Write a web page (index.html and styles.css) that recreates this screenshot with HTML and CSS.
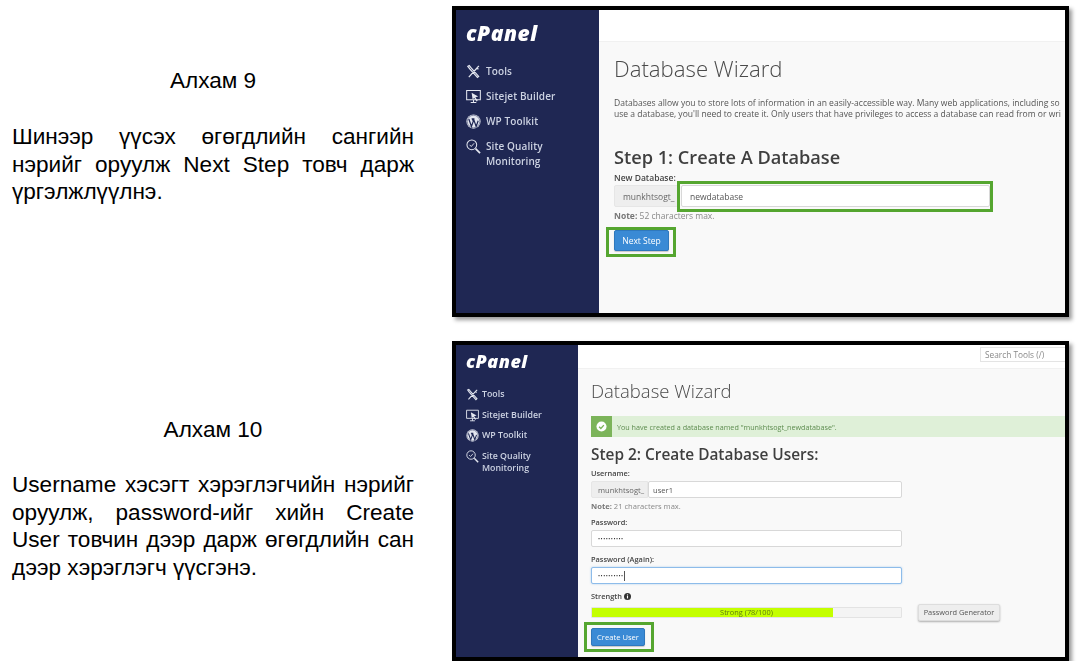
FILE: index.html
```html
<!DOCTYPE html>
<html lang="mn">
<head>
    <meta charset="UTF-8">
    <meta name="viewport" content="width=device-width, initial-scale=1.0">
    <title>Алхам 9, 10</title>
    <link rel="stylesheet" href="styles.css">
</head>
<body>
    <section class="step step-one">
        <div class="step-text">
            <h2>Алхам 9</h2>
            <p>Шинээр үүсэх өгөгдлийн сангийн нэрийг оруулж Next Step товч дарж үргэлжлүүлнэ.</p>
        </div>

        <div class="frame">
            <div class="shot">
                <aside class="side">
                    <div class="logo">cPanel</div>
                    <ul class="menu">
                        <li><svg class="ico" viewBox="0 0 16 16"><use href="#i-tools"/></svg><span>Tools</span></li>
                        <li><svg class="ico" viewBox="0 0 16 16"><use href="#i-sitejet"/></svg><span>Sitejet Builder</span></li>
                        <li><svg class="ico" viewBox="0 0 16 16"><use href="#i-wp"/></svg><span>WP Toolkit</span></li>
                        <li><svg class="ico" viewBox="0 0 16 16"><use href="#i-quality"/></svg><span>Site Quality<br>Monitoring</span></li>
                    </ul>
                </aside>
                <main class="main">
                    <div class="topbar"></div>
                    <div class="content">
                        <h1>Database Wizard</h1>
                        <p class="desc">Databases allow you to store lots of information in an easily-accessible way. Many web applications, including so<br>use a database, you'll need to create it. Only users that have privileges to access a database can read from or wri</p>
                        <h3>Step 1: Create A Database</h3>
                        <div class="label">New Database:</div>
                        <div class="group">
                            <span class="addon">munkhtsogt_</span>
                            <span class="field">newdatabase</span>
                        </div>
                        <div class="note"><b>Note:</b> 52 characters max.</div>
                        <div class="btn">Next Step</div>
                    </div>
                </main>
            </div>
            <div class="mark mark-input"></div>
            <div class="mark mark-next"></div>
        </div>
    </section>

    <section class="step step-two">
        <div class="step-text">
            <h2>Алхам 10</h2>
            <p>Username хэсэгт хэрэглэгчийн нэрийг оруулж, password-ийг хийн Create User товчин дээр дарж өгөгдлийн сан дээр хэрэглэгч үүсгэнэ.</p>
        </div>

        <div class="frame">
            <div class="shot">
                <aside class="side">
                    <div class="logo">cPanel</div>
                    <ul class="menu">
                        <li><svg class="ico" viewBox="0 0 16 16"><use href="#i-tools"/></svg><span>Tools</span></li>
                        <li><svg class="ico" viewBox="0 0 16 16"><use href="#i-sitejet"/></svg><span>Sitejet Builder</span></li>
                        <li><svg class="ico" viewBox="0 0 16 16"><use href="#i-wp"/></svg><span>WP Toolkit</span></li>
                        <li><svg class="ico" viewBox="0 0 16 16"><use href="#i-quality"/></svg><span>Site Quality<br>Monitoring</span></li>
                    </ul>
                </aside>
                <main class="main">
                    <div class="topbar"><div class="search">Search Tools (/)</div></div>
                    <div class="content">
                        <h1>Database Wizard</h1>
                        <div class="alert">
                            <span class="alert-icon"><svg viewBox="0 0 12 12"><circle cx="6" cy="6" r="5.5" fill="#fff"/><path d="M3.4 6.2l1.9 1.9 3.3-3.6" fill="none" stroke="#7cb45a" stroke-width="1.5"/></svg></span>
                            <span class="alert-text">You have created a database named "munkhtsogt_newdatabase".</span>
                        </div>
                        <h3>Step 2: Create Database Users:</h3>
                        <div class="label">Username:</div>
                        <div class="group">
                            <span class="addon">munkhtsogt_</span>
                            <span class="field field-user">user1</span>
                        </div>
                        <div class="note"><b>Note:</b> 21 characters max.</div>
                        <div class="label label-gap">Password:</div>
                        <div class="group"><span class="field dots">••••••••••</span></div>
                        <div class="label label-gap2">Password (Again):</div>
                        <div class="group"><span class="field dots focus"><span class="caret">••••••••••</span></span></div>
                        <div class="label label-gap2">Strength <svg class="info" viewBox="0 0 10 10"><circle cx="5" cy="5" r="5" fill="#333"/><rect x="4.2" y="4.2" width="1.6" height="3.6" fill="#fff"/><rect x="4.2" y="2" width="1.6" height="1.5" fill="#fff"/></svg></div>
                        <div class="strength-row">
                            <div class="bar"><div class="bar-fill" style="width: 78%"></div><span class="bar-text">Strong (78/100)</span></div>
                            <div class="btn-grey">Password Generator</div>
                        </div>
                        <div class="btn">Create User</div>
                    </div>
                </main>
            </div>
            <div class="mark mark-create"></div>
        </div>
    </section>

    <!-- icons used in both sidebars -->
    <svg class="defs" aria-hidden="true">
        <symbol id="i-tools" viewBox="0 0 16 16">
            <path d="M3 14L11.5 4.5M13.8 2.2l-1.9 1.7.3 1.2 1.2.2M2 2.5l1.5-.8 2 2.5 8 9-1.3 1.2-8-9z" fill="none" stroke="currentColor" stroke-width="1.3"/>
        </symbol>
        <symbol id="i-sitejet" viewBox="0 0 16 16">
            <path d="M.7 1.5h14.6v10H.7zM5 14.5h6M8 11.5v3" fill="none" stroke="currentColor" stroke-width="1.1"/>
            <path d="M6 4l7 4-3 .8 2.5 3.7-1.2.8-2.4-3.6L7 11z" fill="currentColor"/>
        </symbol>
        <symbol id="i-wp" viewBox="0 0 16 16">
            <circle cx="8" cy="8" r="7.6" fill="currentColor"/>
            <circle cx="8" cy="8" r="6.7" fill="none" stroke="#1f2753" stroke-width=".5"/>
            <path d="M3 5.4l2.8 7.8 2-5.5-.9-2.3M6 5.2h3M8 5.2l2.8 8 2.2-6" fill="none" stroke="#1f2753" stroke-width="1.3"/>
        </symbol>
        <symbol id="i-quality" viewBox="0 0 16 16">
            <circle cx="6.2" cy="6.2" r="5.2" fill="none" stroke="currentColor" stroke-width="1.1"/>
            <path d="M3.8 6.2l1.8 1.8 3-3.4" fill="none" stroke="currentColor" stroke-width="1"/>
            <path d="M10.2 10.2l4.8 4.8" fill="none" stroke="currentColor" stroke-width="1.8"/>
        </symbol>
    </svg>
</body>
</html>
```

FILE: styles.css
```css
* {
    margin: 0;
    padding: 0;
    box-sizing: border-box;
}

body {
    background: white;
    color: #000;
    font-family: 'Liberation Sans', Arial, sans-serif;
    overflow: hidden;
}

.defs {
    display: none;
}

/* one step = text on the left, screenshot on the right */
.step {
    display: flex;
    gap: 38px;
    padding-left: 12px;
}

.step-one {
    margin-top: 6px;
}

.step-two {
    margin-top: 24px;
}

.step-text {
    width: 402px;
    font-size: 22.6px;
    line-height: 27.8px;
}

.step-one .step-text {
    padding-top: 61px;
}

.step-two .step-text {
    padding-top: 75px;
}

.step-text h2 {
    font-size: 22.6px;
    font-weight: normal;
    text-align: center;
    margin-bottom: 28px;
}

.step-two .step-text h2 {
    margin-bottom: 27px;
}

.step-text p {
    text-align: justify;
}

/* screenshot frame */
.frame {
    position: relative;
    width: 617px;
    border: 4px solid #000;
    box-shadow: 3px 3px 4px rgba(0, 0, 0, 0.4);
}

.step-one .frame {
    height: 311px;
}

.step-two .frame {
    height: 320px;
}

.shot {
    display: flex;
    height: 100%;
    overflow: hidden;
    font-family: 'Open Sans', sans-serif;
    filter: blur(0.3px);
}

.side {
    flex-shrink: 0;
    background: #1f2753;
    color: #ccd2e2;
    padding-left: 10px;
}

.logo {
    color: white;
    font-family: 'Open Sans', sans-serif;
    font-style: italic;
    font-weight: 800;
    letter-spacing: 0.5px;
}

.menu {
    list-style: none;
}

.menu li {
    display: flex;
    align-items: flex-start;
    font-weight: 600;
}

.ico {
    flex-shrink: 0;
    color: #e4e7f0;
}

.main {
    flex: 1;
    min-width: 0;
    background: #f9f9f9;
    color: #444;
}

.topbar {
    background: white;
    border-bottom: 1px solid #f1f1f1;
    display: flex;
    justify-content: flex-end;
}

.content {
    white-space: nowrap;
}

h1 {
    font-weight: 300;
    color: #4a4a4a;
}

h3 {
    font-weight: 600;
    color: #3f3f3f;
}

.label {
    font-weight: 600;
    color: #444;
}

.group {
    display: flex;
}

.addon {
    background: #eee;
    border: 1px solid #e6e6e6;
    color: #666;
    display: flex;
    align-items: center;
    border-radius: 2px 0 0 2px;
}

.field {
    flex: 1;
    background: white;
    border: 1px solid #d8d8d8;
    color: #555;
    display: flex;
    align-items: center;
    border-radius: 2px;
}

.note {
    color: #888;
}

.note b {
    font-weight: 700;
    color: #777;
}

.btn {
    background: #3a8ad5;
    color: white;
    border: 1px solid #2f78bd;
    border-radius: 2px;
    box-shadow: 0 1px 1px rgba(0, 0, 0, 0.2);
    display: flex;
    align-items: center;
    justify-content: center;
}

/* green boxes drawn over the screenshot */
.mark {
    position: absolute;
    border: 3px solid #55a630;
}

.mark-input {
    left: 221px;
    top: 171px;
    width: 316px;
    height: 31px;
}

.mark-next {
    left: 150px;
    top: 217px;
    width: 70px;
    height: 30px;
}

.mark-create {
    left: 128px;
    top: 277px;
    width: 70px;
    height: 30px;
}

/* first screenshot */
.step-one .side {
    width: 143px;
}

.step-one .logo {
    font-size: 21px;
    line-height: 24px;
    margin-top: 11px;
}

.step-one .menu {
    margin-top: 18.5px;
    font-size: 10px;
    line-height: 15px;
    letter-spacing: 0.1px;
}

.step-one .menu li {
    margin-bottom: 10px;
}

.step-one .ico {
    width: 15px;
    height: 15px;
    margin-right: 5px;
}

.step-one .topbar {
    height: 32px;
}

.step-one .content {
    padding-left: 15px;
}

.step-one h1 {
    font-size: 22.2px;
    line-height: 30px;
    margin-top: 12px;
}

.desc {
    font-size: 8.55px;
    line-height: 11px;
    color: #555;
    margin-top: 14px;
}

.step-one h3 {
    font-size: 18.2px;
    line-height: 24px;
    margin-top: 25px;
}

.step-one .label {
    font-size: 8.5px;
    line-height: 11px;
    margin-top: 3px;
}

.step-one .group {
    height: 22px;
    width: 376px;
    margin-top: 2px;
    gap: 3px;
}

.step-one .addon {
    width: 64px;
    padding-left: 8px;
    font-size: 8.5px;
}

.step-one .field {
    padding-left: 8px;
    font-size: 8.5px;
}

.step-one .note {
    font-size: 8.5px;
    line-height: 11px;
    margin-top: 2.5px;
}

.step-one .btn {
    width: 55px;
    height: 21px;
    font-size: 8.5px;
    margin-top: 9.5px;
}

/* second screenshot */
.step-two .side {
    width: 122px;
}

.step-two .logo {
    font-size: 18px;
    line-height: 20px;
    margin-top: 6px;
}

.step-two .menu {
    margin-top: 17px;
    font-size: 8.8px;
    line-height: 12px;
}

.step-two .menu li {
    margin-bottom: 7.5px;
}

.step-two .ico {
    width: 13px;
    height: 13px;
    margin-right: 3px;
}

.step-two .topbar {
    height: 24px;
    align-items: flex-start;
    padding-top: 2px;
}

.search {
    width: 85px;
    height: 15px;
    background: white;
    border: 1px solid #e4e4e4;
    border-right: none;
    color: #888;
    font-size: 8.3px;
    line-height: 13px;
    padding-left: 4px;
}

.step-two .content {
    padding-left: 13px;
}

.step-two h1 {
    font-size: 18.5px;
    line-height: 26px;
    margin-top: 9px;
}

.alert {
    display: flex;
    height: 21px;
    margin-top: 12px;
    background: #dff0d8;
    color: #5d8c4f;
    font-size: 7.2px;
    align-items: center;
}

.alert-icon {
    width: 21px;
    height: 21px;
    background: #7cb45a;
    display: flex;
    align-items: center;
    justify-content: center;
    margin-right: 5px;
}

.alert-icon svg {
    width: 11px;
    height: 11px;
}

.step-two h3 {
    font-size: 15.4px;
    line-height: 20px;
    margin-top: 8px;
}

.step-two .label {
    font-size: 7.4px;
    line-height: 10px;
    margin-top: 3px;
}

.step-two .label-gap {
    margin-top: 6px;
}

.step-two .label-gap2 {
    margin-top: 7px;
}

.step-two .group {
    height: 17px;
    width: 311px;
    margin-top: 3px;
    font-size: 7.6px;
}

.step-two .addon {
    width: 57px;
    padding-left: 6px;
}

.step-two .field {
    padding-left: 6px;
}

.step-two .field-user {
    padding-left: 4px;
}

.step-two .dots {
    font-size: 5.5px;
    letter-spacing: 0.5px;
    color: #333;
}

.focus {
    border-color: #8dbcea;
    box-shadow: 0 0 2px rgba(90, 160, 230, 0.5);
}

.caret {
    border-right: 1px solid #555;
    line-height: 10px;
}

.step-two .note {
    font-size: 7.6px;
    line-height: 10px;
    margin-top: 3px;
}

.info {
    width: 7px;
    height: 7px;
    vertical-align: -0.5px;
}

.strength-row {
    display: flex;
    align-items: center;
    gap: 16px;
    margin-top: 3px;
}

.bar {
    position: relative;
    width: 311px;
    height: 11px;
    background: #f4f4f4;
    border: 1px solid #e3e3e3;
    border-radius: 1px;
}

.bar-fill {
    height: 100%;
    background: #c4ff00;
}

.bar-text {
    position: absolute;
    left: 0;
    right: 0;
    top: 0;
    text-align: center;
    font-size: 7.4px;
    line-height: 9px;
    color: #5e7a10;
}

.btn-grey {
    width: 82px;
    height: 17px;
    background: #eee;
    border: 1px solid #ddd;
    border-radius: 2px;
    box-shadow: 0 1px 2px rgba(0, 0, 0, 0.3);
    color: #555;
    font-size: 7.4px;
    line-height: 15px;
    text-align: center;
}

.step-two .btn {
    width: 54px;
    height: 18px;
    font-size: 7.6px;
    margin-top: 7px;
}
```
